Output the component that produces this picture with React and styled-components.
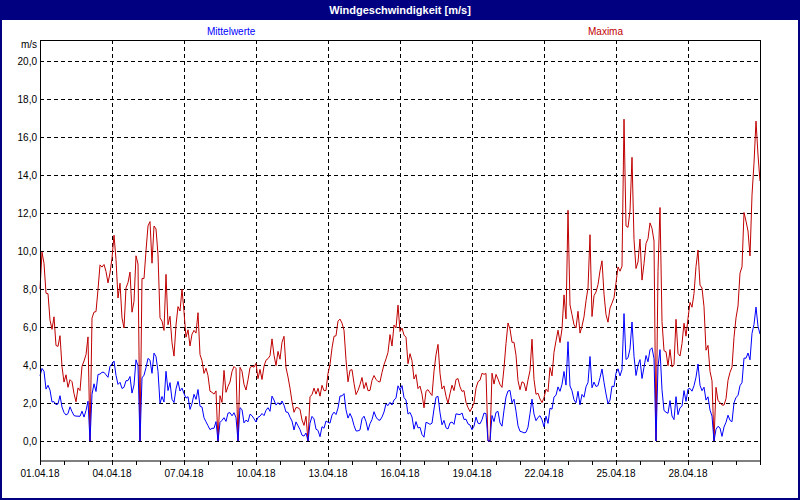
import React from "react";
import styled, { createGlobalStyle } from "styled-components";

const Global = createGlobalStyle`
  html, body { margin: 0; padding: 0; background: #fff; }
  body { font-family: "Liberation Sans", sans-serif; }
`;

const Window = styled.div`
  width: 800px; height: 500px; box-sizing: border-box;
  border: 2px solid #000080; border-top: none;
  display: flex; flex-direction: column; background: #fff;
`;
const TitleBar = styled.div`
  height: 20px; background: #000080; color: #fff;
  font: bold 11px "Liberation Sans", sans-serif;
  display: flex; align-items: center; justify-content: center;
  margin: 0 -2px;
`;
const Legend = styled.div`
  height: 17px; display: flex; align-items: flex-end;
  font: 10px "Liberation Sans", sans-serif;
`;
const LegendItem = styled.span`
  position: relative; left: ${p => p.$x}px; width: 0; white-space: nowrap;
  transform: translateX(-50%); display: inline-block;
  color: ${p => p.$color};
`;
const Chart = styled.svg`
  display: block; flex: 1;
`;

function rng(seed) {
  let s = seed;
  return () => { s = (s * 16807) % 2147483647; return (s - 1) / 2147483646; };
}
const maxAnch = [10,8,4,2,5,8,10,8,6,14,7,6,7,5,3,2.5,3,3,3.5,4,6,2,1,3,3.5,5,3,3,4,5,6,4,2,4,2,3,2,4,3,5,3,3,2.5,5,8,6,7,8,10,11,9,11,5,4,6,8,3,2,6,14,15];
function series() {
  const r = rng(987);
  const maxP = [], meanP = [];
  let nm = 1, na = 0;
  for (let i = 0; i <= 360; i++) {
    const x = 40 + i * 2;
    const t = (x - 40) / 12;
    const k = Math.min(Math.floor(t), 59);
    const f = t - k;
    const base = maxAnch[k] * (1 - f) + maxAnch[k + 1] * f;
    nm = nm * 0.55 + (r() * 0.9 + 0.55) * 0.45;
    na = na * 0.6 + (r() - 0.5) * 0.8;
    let m = base * nm + (r() < 0.04 ? base * 0.5 : 0);
    let a = Math.max(0, m * 0.42 + na - 0.2);
    if (r() < 0.025) { m = 0; a = 0; }
    m = Math.min(20, Math.max(0, m));
    a = Math.min(m, a);
    maxP.push(`${x},${(441 - 19 * m).toFixed(1)}`);
    meanP.push(`${x},${(441 - 19 * a).toFixed(1)}`);
  }
  return { maxP: maxP.join(" "), meanP: meanP.join(" ") };
}
const { maxP, meanP } = series();
const yVals = [0,2,4,6,8,10,12,14,16,18,20];
const xLabels = ["01.04.18","04.04.18","07.04.18","10.04.18","13.04.18","16.04.18","19.04.18","22.04.18","25.04.18","28.04.18"];

export default function App() {
  return (
    <Window>
      <Global />
      <TitleBar>Windgeschwindigkeit [m/s]</TitleBar>
      <Legend>
        <LegendItem $x={205} $color="#0000ff">Mittelwerte</LegendItem>
        <LegendItem $x={586} $color="#c00000">Maxima</LegendItem>
      </Legend>
      <Chart viewBox="2 37 796 461">
        <g fontFamily="Liberation Sans, sans-serif" fontSize="10" fill="#000">
          {yVals.map(v => (
            <g key={v}>
              <line x1="40" x2="760" y1={441 - 19 * v + 0.5} y2={441 - 19 * v + 0.5} stroke="#000" strokeDasharray="4 3" />
              <text x="37" y={441 - 19 * v + 4} textAnchor="end">{v.toFixed(1).replace(".", ",")}</text>
            </g>
          ))}
          <text x="37" y="48" textAnchor="end">m/s</text>
          {xLabels.map((l, i) => (
            <g key={l}>
              {i > 0 && <line x1={40 + 72 * i + 0.5} x2={40 + 72 * i + 0.5} y1="40" y2="461" stroke="#000" strokeDasharray="4 3" />}
              <text x={40 + 72 * i} y="477" textAnchor="middle">{l}</text>
            </g>
          ))}
          {Array.from({ length: 31 }, (_, i) => (
            <line key={i} x1={40 + 24 * i + 0.5} x2={40 + 24 * i + 0.5} y1="461" y2="465" stroke="#000" />
          ))}
          <polyline points={maxP} fill="none" stroke="#c00000" strokeWidth="1" />
          <polyline points={meanP} fill="none" stroke="#0000ff" strokeWidth="1" />
          <rect x="40.5" y="40.5" width="720" height="420.5" fill="none" stroke="#000" />
        </g>
      </Chart>
    </Window>
  );
}
